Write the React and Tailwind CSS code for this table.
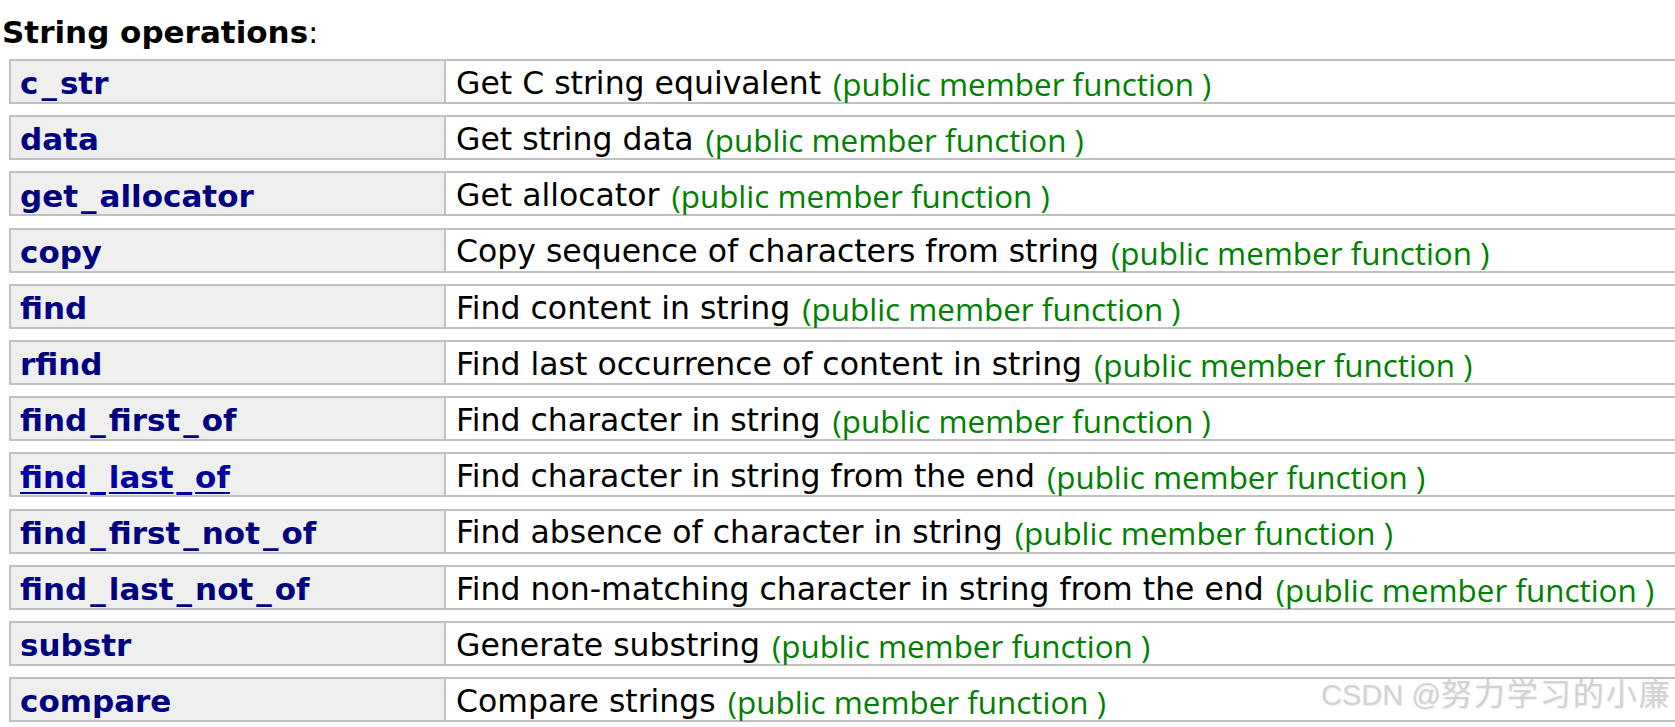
import React from 'react';

const rows = [
    { name: 'c_str', desc: 'Get C string equivalent' },
    { name: 'data', desc: 'Get string data' },
    { name: 'get_allocator', desc: 'Get allocator' },
    { name: 'copy', desc: 'Copy sequence of characters from string' },
    { name: 'find', desc: 'Find content in string' },
    { name: 'rfind', desc: 'Find last occurrence of content in string' },
    { name: 'find_first_of', desc: 'Find character in string' },
    { name: 'find_last_of', desc: 'Find character in string from the end', link: true },
    { name: 'find_first_not_of', desc: 'Find absence of character in string' },
    { name: 'find_last_not_of', desc: 'Find non-matching character in string from the end' },
    { name: 'substr', desc: 'Generate substring' },
    { name: 'compare', desc: 'Compare strings' },
];

// underscores a bit wider, like the original bold face
const Name = ({ text }) =>
    text.split('_').map((part, i) => (
        <React.Fragment key={i}>
            {i > 0 && <span className="mx-[3px]">_</span>}
            {part}
        </React.Fragment>
    ));

export default function App() {
    return (
        <div className="relative w-[1675px] h-[727px] overflow-hidden bg-white font-['DejaVu_Sans',sans-serif] text-[31px] text-black">
            {/* Titre */}
            <div className="pt-[14px] pl-[2px] leading-[36px]">
                <span className="font-bold">String operations</span>:
            </div>

            {/* Tableau des opérations */}
            <div className="mt-[9px] ml-[9px] w-[1720px] flex flex-col gap-[11.2px]">
                {rows.map((r) => (
                    <div key={r.name} className="flex h-[45px] border-2 border-[#c0c0c0]">
                        <div className="w-[435px] shrink-0 flex items-center pt-[4px] pl-[9px] bg-[#efefef] border-r-2 border-[#c0c0c0] whitespace-nowrap">
                            {r.link ? (
                                <a href="#" className="font-bold text-[#0000a0] underline decoration-2 underline-offset-[4px]"><Name text={r.name} /></a>
                            ) : (
                                <span className="font-bold text-[#000080]"><Name text={r.name} /></span>
                            )}
                        </div>
                        <div className="flex-1 flex items-center pt-[4px] pl-[10px] whitespace-nowrap">
                            <span className="text-[31.5px]">{r.desc}</span>
                            <span className="ml-[12px] text-[31.4px] text-[#008000] font-['Open_Sans',sans-serif]">(public member function )</span>
                        </div>
                    </div>
                ))}
            </div>

            {/* Filigrane */}
            <div className="absolute left-[1321px] top-[672px] flex items-baseline leading-[40px] text-[#d2d2d2] [text-shadow:1px_1px_1px_rgba(0,0,0,0.08)] whitespace-nowrap">
                <span className="text-[29px] font-['Liberation_Sans',sans-serif]">CSDN @</span>
                <span className="text-[31px] tracking-[2px] font-['Noto_Sans_CJK_SC',sans-serif]">努力学习的小廉</span>
            </div>
        </div>
    );
}
